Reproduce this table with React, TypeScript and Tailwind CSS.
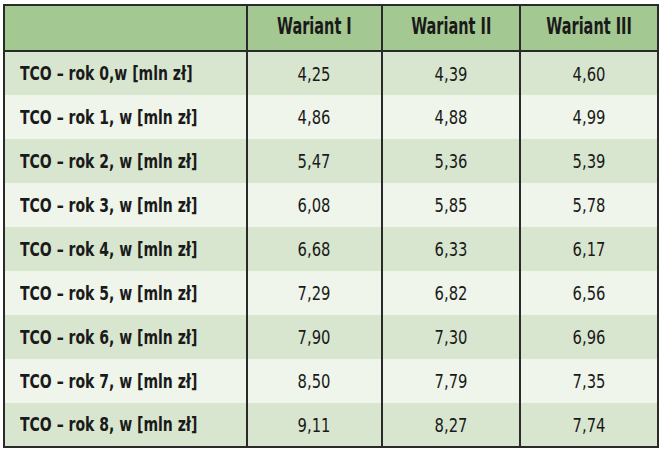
const ROWS: [string, string, string, string][] = [
  ['TCO – rok 0,w [mln zł]', '4,25', '4,39', '4,60'],
  ['TCO – rok 1, w [mln zł]', '4,86', '4,88', '4,99'],
  ['TCO – rok 2, w [mln zł]', '5,47', '5,36', '5,39'],
  ['TCO – rok 3, w [mln zł]', '6,08', '5,85', '5,78'],
  ['TCO – rok 4, w [mln zł]', '6,68', '6,33', '6,17'],
  ['TCO – rok 5, w [mln zł]', '7,29', '6,82', '6,56'],
  ['TCO – rok 6, w [mln zł]', '7,90', '7,30', '6,96'],
  ['TCO – rok 7, w [mln zł]', '8,50', '7,79', '7,35'],
  ['TCO – rok 8, w [mln zł]', '9,11', '8,27', '7,74'],
]

const HEADERS = ['Wariant I', 'Wariant II', 'Wariant III']

export default function App() {
  return (
    <div className="w-[660px] h-[450px] bg-white pt-[4px] pl-[3px] font-['Liberation_Sans_Narrow','DejaVu_Sans_Condensed',sans-serif] text-[#1a1a1a]">
      <table className="w-[656px] border-collapse border-2 border-[#2a2a2a]">
        <colgroup>
          <col className="w-[243px]" />
          <col className="w-[136px]" />
          <col className="w-[139px]" />
          <col className="w-[138px]" />
        </colgroup>
        <thead>
          <tr className="h-[46px] bg-[#a4c891] border-b-2 border-[#2a2a2a]">
            <th className="border-r-2 border-[#2a2a2a]" />
            {HEADERS.map((h, i) => (
              <th
                key={h}
                className={`text-[23px] font-bold text-center pb-[4px] ${i < 2 ? 'border-r-2 border-[#2a2a2a]' : ''}`}
              >
                <span className="inline-block scale-x-[0.7] whitespace-nowrap">{h}</span>
              </th>
            ))}
          </tr>
        </thead>
        <tbody>
          {ROWS.map((row, r) => (
            <tr key={r} className={`h-[44px] ${r % 2 === 0 ? 'bg-[#d9e6cf]' : 'bg-[#eff5ea]'}`}>
              <td className="pl-[15px] text-[19px] font-bold border-r-2 border-[#2a2a2a]">
                <span className="inline-block scale-x-[0.82] origin-left whitespace-nowrap">{row[0]}</span>
              </td>
              {row.slice(1).map((v, i) => (
                <td
                  key={i}
                  className={`text-center text-[20px] ${i < 2 ? 'border-r-2 border-[#2a2a2a]' : ''}`}
                >
                  <span className="inline-block scale-x-[0.82]">{v}</span>
                </td>
              ))}
            </tr>
          ))}
        </tbody>
      </table>
    </div>
  )
}
